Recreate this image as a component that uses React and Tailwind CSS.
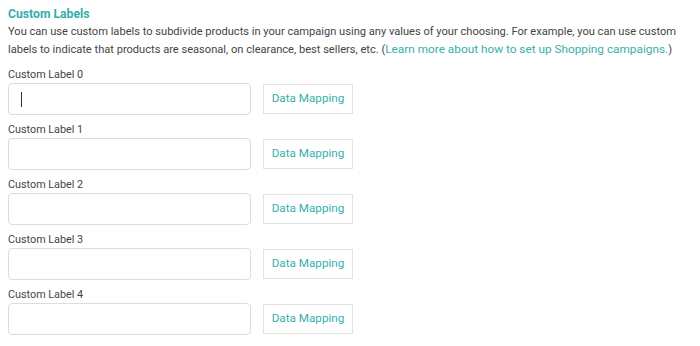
const labels = [0, 1, 2, 3, 4];

const LabelRow = ({ index }) => (
  <div className="mt-[7px] first:mt-0">
    <div className="h-4 text-[10.8px] leading-4 text-[#444]">Custom Label {index}</div>
    <div className="flex items-center">
      <div className="relative h-8 w-[243px] rounded-[4px] border border-[#dcdcdc] bg-white">
        {index === 0 && <span className="absolute left-[12px] top-[8px] h-[15px] w-px bg-[#333]"></span>}
      </div>
      <button className="ml-3 h-[30px] w-[90px] border border-[#e3e3e3] bg-white text-[11.7px] text-[#35b0ab]">
        Data Mapping
      </button>
    </div>
  </div>
);

export default function App() {
  return (
    <div className="h-[346px] w-[700px] bg-white px-2 pt-[6px]" style={{ fontFamily: 'Roboto, "Liberation Sans", sans-serif' }}>
      <h2 className="text-[12.2px] font-bold leading-4 text-[#33aea9]">Custom Labels</h2>
      <p className="mt-[2px] h-[33px] whitespace-nowrap text-[11.1px] leading-[16.5px] text-[#444]">
        You can use custom labels to subdivide products in your campaign using any values of your choosing. For example, you can use custom
        <br />
        labels to indicate that products are seasonal, on clearance, best sellers, etc. (<span className="text-[11.8px] leading-[16px] text-[#35b0ab]">Learn more about how to set up Shopping campaigns.</span>)
      </p>
      <div className="mt-[10px]">
        {labels.map((i) => (
          <LabelRow key={i} index={i} />
        ))}
      </div>
    </div>
  );
}
